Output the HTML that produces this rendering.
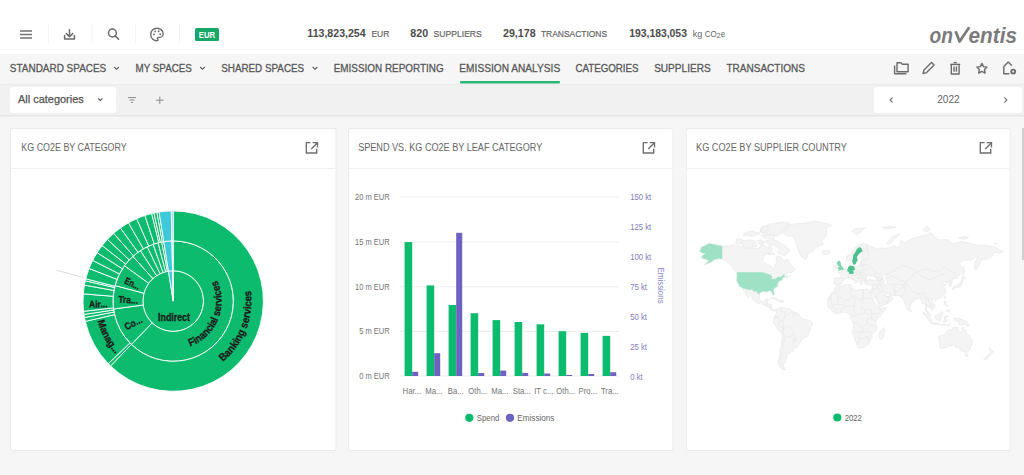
<!DOCTYPE html>
<html><head><meta charset="utf-8"><style>
*{margin:0;padding:0}html,body{width:1024px;height:475px;overflow:hidden;background:#f6f6f6}
svg{position:absolute;left:0;top:0;font-family:"Liberation Sans", sans-serif}
</style></head><body>
<svg width="1024" height="475" viewBox="0 0 1024 475">
<rect x="0" y="0" width="1024" height="475" fill="#f6f6f6"/>
<rect x="0" y="0" width="1024" height="54" fill="#ffffff"/>
<rect x="0" y="49" width="1024" height="1" fill="#fafafa"/>
<rect x="0" y="54" width="1024" height="30" fill="#f6f6f6"/>
<rect x="0" y="84" width="1024" height="1" fill="#ececec"/>
<rect x="0" y="85" width="1024" height="30" fill="#f1f1f1"/>
<rect x="0" y="115" width="1024" height="1.5" fill="#e6e6e6"/>
<rect x="48" y="24" width="1" height="19" fill="#f3f3f3"/>
<rect x="91.5" y="24" width="1" height="19" fill="#f3f3f3"/>
<rect x="135" y="24" width="1" height="19" fill="#f3f3f3"/>
<rect x="179" y="24" width="1" height="19" fill="#f3f3f3"/>
<path d="M20 31h12M20 34.5h12M20 38h12" stroke="#727272" stroke-width="1.35" fill="none"/>
<path d="M69.5 29.8v6.7M66.3 33.6l3.2 3.2 3.2-3.2M64.6 35.5v3.6h9.8v-3.6" stroke="#6b6b6b" stroke-width="1.5" fill="none" stroke-linejoin="round" stroke-linecap="round"/>
<circle cx="112.4" cy="33" r="3.9" stroke="#6b6b6b" stroke-width="1.5" fill="none"/><path d="M115.3 35.9l3.3 3.4" stroke="#6b6b6b" stroke-width="1.6" stroke-linecap="round"/>
<path d="M157 28.2c-3.6 0-6.3 2.8-6.3 6.3s2.8 6.3 6.3 6.3c.6 0 1-.5 1-1 0-.3-.1-.5-.3-.7-.2-.2-.3-.5-.3-.7 0-.6.5-1 1-1h1.3c1.9 0 3.5-1.6 3.5-3.5 0-3.1-2.8-5.7-6.2-5.7z" stroke="#6b6b6b" stroke-width="1.4" fill="none"/>
<circle cx="153.9" cy="34.4" r="0.95" fill="#6b6b6b"/>
<circle cx="155.2" cy="31.4" r="0.95" fill="#6b6b6b"/>
<circle cx="158.6" cy="31.3" r="0.95" fill="#6b6b6b"/>
<circle cx="160.2" cy="34.2" r="0.95" fill="#6b6b6b"/>
<rect x="195" y="28" width="24" height="13" rx="1.5" fill="#17a766"/>
<text x="198.82" y="37.90" textLength="16.37" lengthAdjust="spacingAndGlyphs" style="font-size:9.59px;font-weight:bold;fill:#ffffff">EUR</text>
<text x="307.39" y="37.00" textLength="58.23" lengthAdjust="spacingAndGlyphs" style="font-size:10.32px;font-weight:bold;fill:#4b4b4b">113,823,254</text>
<text x="371.41" y="37.20" textLength="17.88" lengthAdjust="spacingAndGlyphs" style="font-size:9.74px;font-weight:normal;fill:#636363;stroke:#636363;stroke-width:0.2px">EUR</text>
<text x="410.29" y="37.00" textLength="17.83" lengthAdjust="spacingAndGlyphs" style="font-size:10.32px;font-weight:bold;fill:#4b4b4b">820</text>
<text x="433.61" y="37.20" textLength="48.18" lengthAdjust="spacingAndGlyphs" style="font-size:9.74px;font-weight:normal;fill:#636363;stroke:#636363;stroke-width:0.2px">SUPPLIERS</text>
<text x="502.99" y="37.00" textLength="32.63" lengthAdjust="spacingAndGlyphs" style="font-size:10.32px;font-weight:bold;fill:#4b4b4b">29,178</text>
<text x="540.91" y="37.20" textLength="66.18" lengthAdjust="spacingAndGlyphs" style="font-size:9.74px;font-weight:normal;fill:#636363;stroke:#636363;stroke-width:0.2px">TRANSACTIONS</text>
<text x="629.19" y="37.00" textLength="57.73" lengthAdjust="spacingAndGlyphs" style="font-size:10.32px;font-weight:bold;fill:#4b4b4b">193,183,053</text>
<text x="692.81" y="36.60" textLength="9.48" lengthAdjust="spacingAndGlyphs" style="font-size:9.59px;font-weight:normal;fill:#636363">kg</text>
<text x="704.70" y="36.60" textLength="12.09" lengthAdjust="spacingAndGlyphs" style="font-size:9.88px;font-weight:normal;fill:#636363">CO</text>
<text x="716.52" y="38.20" textLength="4.16" lengthAdjust="spacingAndGlyphs" style="font-size:6.98px;font-weight:normal;fill:#636363">2</text>
<text x="720.81" y="36.60" textLength="4.48" lengthAdjust="spacingAndGlyphs" style="font-size:9.59px;font-weight:normal;fill:#636363">e</text>
<text x="929.60" y="42.90" textLength="23.40" lengthAdjust="spacingAndGlyphs" style="font-size:22.38px;font-weight:bold;fill:#7b7b7b;font-style:italic">on</text>
<path d="M955.6 31.2L959.6 41.6L969.2 27.2" stroke="#7b7b7b" stroke-width="2.7" fill="none" stroke-linejoin="round"/>
<text x="968.60" y="42.90" textLength="48.40" lengthAdjust="spacingAndGlyphs" style="font-size:22.38px;font-weight:bold;fill:#7b7b7b;font-style:italic">entis</text>
<text x="9.83" y="72.00" textLength="96.43" lengthAdjust="spacingAndGlyphs" style="font-size:11.63px;font-weight:normal;fill:#575757;stroke:#575757;stroke-width:0.32px">STANDARD SPACES</text>
<text x="135.53" y="72.00" textLength="56.33" lengthAdjust="spacingAndGlyphs" style="font-size:11.63px;font-weight:normal;fill:#575757;stroke:#575757;stroke-width:0.32px">MY SPACES</text>
<text x="221.23" y="72.00" textLength="82.93" lengthAdjust="spacingAndGlyphs" style="font-size:11.63px;font-weight:normal;fill:#575757;stroke:#575757;stroke-width:0.32px">SHARED SPACES</text>
<text x="333.73" y="72.00" textLength="109.93" lengthAdjust="spacingAndGlyphs" style="font-size:11.63px;font-weight:normal;fill:#575757;stroke:#575757;stroke-width:0.32px">EMISSION REPORTING</text>
<text x="459.33" y="72.00" textLength="100.83" lengthAdjust="spacingAndGlyphs" style="font-size:11.63px;font-weight:normal;fill:#575757;stroke:#575757;stroke-width:0.32px">EMISSION ANALYSIS</text>
<text x="575.43" y="72.00" textLength="63.13" lengthAdjust="spacingAndGlyphs" style="font-size:11.63px;font-weight:normal;fill:#575757;stroke:#575757;stroke-width:0.32px">CATEGORIES</text>
<text x="654.13" y="72.00" textLength="56.53" lengthAdjust="spacingAndGlyphs" style="font-size:11.63px;font-weight:normal;fill:#575757;stroke:#575757;stroke-width:0.32px">SUPPLIERS</text>
<text x="726.53" y="72.00" textLength="78.33" lengthAdjust="spacingAndGlyphs" style="font-size:11.63px;font-weight:normal;fill:#575757;stroke:#575757;stroke-width:0.32px">TRANSACTIONS</text>
<path d="M114.2 67l2.3 2.3 2.3-2.3" stroke="#575757" stroke-width="1.1" fill="none"/>
<path d="M200.2 67l2.3 2.3 2.3-2.3" stroke="#575757" stroke-width="1.1" fill="none"/>
<path d="M312.7 67l2.3 2.3 2.3-2.3" stroke="#575757" stroke-width="1.1" fill="none"/>
<rect x="460" y="81" width="100" height="2.5" rx="1" fill="#2cb678"/>
<g stroke="#6b6b6b" stroke-width="1.4" fill="none" stroke-linejoin="round"><path d="M894.6 65.5v8.3h11.8"/><path d="M897 62.8h4l1.3 1.5h5.8v7.5H897z"/><path d="M923 73.6l1-3.6 7.5-7.5 2.6 2.6-7.5 7.5z"/><path d="M950.2 64.4h10"/><path d="M951.3 64.4v9.6h7.8v-9.6"/><path d="M953.6 62.6h3.2"/><path d="M954 66.6v5.2M956.4 66.6v5.2"/><path d="M981.9 63.4l1.6 3.2 3.5.5-2.5 2.5.6 3.5-3.2-1.7-3.2 1.7.6-3.5-2.5-2.5 3.5-.5z"/><path d="M1011.8 65.6l-3.6-3.6-4.4 4.4v7.4h5.6"/></g>
<circle cx="1013.2" cy="71.6" r="2.9" fill="#6b6b6b"/><circle cx="1013.2" cy="71.6" r="1.1" fill="#f6f6f6"/>
<rect x="10" y="87" width="106" height="26" rx="3" fill="#ffffff"/>
<text x="18.03" y="102.50" textLength="65.73" lengthAdjust="spacingAndGlyphs" style="font-size:11.63px;font-weight:normal;fill:#505050;stroke:#505050;stroke-width:0.25px">All categories</text>
<path d="M98.2 98.3l2.1 2.1 2.1-2.1" stroke="#555" stroke-width="1.2" fill="none"/>
<path d="M128 97.6h8M129.5 100h5M131 102.4h2" stroke="#8a8a8a" stroke-width="1" fill="none"/>
<path d="M159.8 96.5v7.4M156.1 100.2h7.4" stroke="#8a8a8a" stroke-width="1" fill="none"/>
<rect x="874" y="87" width="148" height="26" rx="3" fill="#ffffff"/>
<path d="M892.6 97.5l-2.5 2.5 2.5 2.5" stroke="#777" stroke-width="1.1" fill="none"/>
<path d="M1004.4 97.5l2.5 2.5-2.5 2.5" stroke="#777" stroke-width="1.1" fill="none"/>
<text x="937.23" y="103.20" textLength="22.53" lengthAdjust="spacingAndGlyphs" style="font-size:11.63px;font-weight:normal;fill:#666">2022</text>
<rect x="10" y="128" width="326.5" height="323" rx="2" fill="#ebebeb"/>
<rect x="11" y="129" width="324.5" height="321" rx="1.5" fill="#ffffff"/>
<rect x="12" y="452" width="322.5" height="1" fill="#efefef"/>
<rect x="11" y="168" width="324.5" height="1" fill="#f0f0f0"/>
<g stroke="#6e6e6e" stroke-width="1.35" fill="none"><path d="M310.6 142.6h-4.3v10.4h10.4v-4.3"/><path d="M312.6 142.6h4.9v4.9M317.20000000000005 143l-5.9 5.9"/></g>
<rect x="348" y="128" width="325.5" height="323" rx="2" fill="#ebebeb"/>
<rect x="349" y="129" width="323.5" height="321" rx="1.5" fill="#ffffff"/>
<rect x="350" y="452" width="321.5" height="1" fill="#efefef"/>
<rect x="349" y="168" width="323.5" height="1" fill="#f0f0f0"/>
<g stroke="#6e6e6e" stroke-width="1.35" fill="none"><path d="M647.6 142.6h-4.3v10.4h10.4v-4.3"/><path d="M649.6 142.6h4.9v4.9M654.2 143l-5.9 5.9"/></g>
<rect x="685.8" y="128" width="324.70000000000005" height="323" rx="2" fill="#ebebeb"/>
<rect x="686.8" y="129" width="322.70000000000005" height="321" rx="1.5" fill="#ffffff"/>
<rect x="687.8" y="452" width="320.70000000000005" height="1" fill="#efefef"/>
<rect x="686.8" y="168" width="322.70000000000005" height="1" fill="#f0f0f0"/>
<g stroke="#6e6e6e" stroke-width="1.35" fill="none"><path d="M984.6 142.6h-4.3v10.4h10.4v-4.3"/><path d="M986.6 142.6h4.9v4.9M991.2 143l-5.9 5.9"/></g>
<text x="21.36" y="150.80" textLength="105.38" lengthAdjust="spacingAndGlyphs" style="font-size:11.05px;font-weight:normal;fill:#666">KG CO2E BY CATEGORY</text>
<text x="358.16" y="150.80" textLength="184.08" lengthAdjust="spacingAndGlyphs" style="font-size:11.05px;font-weight:normal;fill:#666">SPEND VS. KG CO2E BY LEAF CATEGORY</text>
<text x="696.06" y="150.80" textLength="150.78" lengthAdjust="spacingAndGlyphs" style="font-size:11.05px;font-weight:normal;fill:#666">KG CO2E BY SUPPLIER COUNTRY</text>
<rect x="1022" y="128" width="2" height="132" fill="#cfcfcf"/>
<path d="M173.20 301.10L173.20 270.80A30.3 30.3 0 1 1 168.46 271.17Z" fill="#0cbb6e" stroke="#ffffff" stroke-width="0.9" stroke-linejoin="round"/>
<path d="M173.20 301.10L168.46 271.17A30.3 30.3 0 0 1 172.57 270.81Z" fill="#3ccadb" stroke="#ffffff" stroke-width="0.9" stroke-linejoin="round"/>
<path d="M173.20 301.10L172.57 270.81A30.3 30.3 0 0 1 173.20 270.80Z" fill="#86cdf0" stroke="#ffffff" stroke-width="0.9" stroke-linejoin="round"/>
<path d="M173.20 240.90A60.2 60.2 0 1 1 131.38 344.40L152.15 322.90A30.3 30.3 0 1 0 173.20 270.80Z" fill="#0cbb6e" stroke="#ffffff" stroke-width="0.9" stroke-linejoin="round"/>
<path d="M131.38 344.40A60.2 60.2 0 0 1 113.52 308.96L143.16 305.05A30.3 30.3 0 0 0 152.15 322.90Z" fill="#0cbb6e" stroke="#ffffff" stroke-width="0.9" stroke-linejoin="round"/>
<path d="M113.52 308.96A60.2 60.2 0 0 1 115.05 285.52L143.93 293.26A30.3 30.3 0 0 0 143.16 305.05Z" fill="#0cbb6e" stroke="#ffffff" stroke-width="0.9" stroke-linejoin="round"/>
<path d="M115.05 285.52A60.2 60.2 0 0 1 124.50 265.72L148.69 283.29A30.3 30.3 0 0 0 143.93 293.26Z" fill="#0cbb6e" stroke="#ffffff" stroke-width="0.9" stroke-linejoin="round"/>
<path d="M124.50 265.72A60.2 60.2 0 0 1 132.92 256.36L152.93 278.58A30.3 30.3 0 0 0 148.69 283.29Z" fill="#0cbb6e" stroke="#ffffff" stroke-width="0.9" stroke-linejoin="round"/>
<path d="M132.92 256.36A60.2 60.2 0 0 1 140.41 250.61L156.70 275.69A30.3 30.3 0 0 0 152.93 278.58Z" fill="#0cbb6e" stroke="#ffffff" stroke-width="0.9" stroke-linejoin="round"/>
<path d="M140.41 250.61A60.2 60.2 0 0 1 147.28 246.76L160.16 273.75A30.3 30.3 0 0 0 156.70 275.69Z" fill="#0cbb6e" stroke="#ffffff" stroke-width="0.9" stroke-linejoin="round"/>
<path d="M147.28 246.76A60.2 60.2 0 0 1 153.10 244.35L163.09 272.54A30.3 30.3 0 0 0 160.16 273.75Z" fill="#0cbb6e" stroke="#ffffff" stroke-width="0.9" stroke-linejoin="round"/>
<path d="M153.10 244.35A60.2 60.2 0 0 1 158.13 242.82L165.61 271.77A30.3 30.3 0 0 0 163.09 272.54Z" fill="#0cbb6e" stroke="#ffffff" stroke-width="0.9" stroke-linejoin="round"/>
<path d="M158.13 242.82A60.2 60.2 0 0 1 161.71 242.01L167.42 271.36A30.3 30.3 0 0 0 165.61 271.77Z" fill="#0cbb6e" stroke="#ffffff" stroke-width="0.9" stroke-linejoin="round"/>
<path d="M161.71 242.01A60.2 60.2 0 0 1 163.78 241.64L168.46 271.17A30.3 30.3 0 0 0 167.42 271.36Z" fill="#0cbb6e" stroke="#ffffff" stroke-width="0.9" stroke-linejoin="round"/>
<path d="M163.78 241.64A60.2 60.2 0 0 1 171.94 240.91L172.57 270.81A30.3 30.3 0 0 0 168.46 271.17Z" fill="#3ccadb" stroke="#ffffff" stroke-width="0.9" stroke-linejoin="round"/>
<path d="M171.94 240.91A60.2 60.2 0 0 1 173.20 240.90L173.20 270.80A30.3 30.3 0 0 0 172.57 270.81Z" fill="#86cdf0" stroke="#ffffff" stroke-width="0.9" stroke-linejoin="round"/>
<path d="M173.20 210.90A90.2 90.2 0 1 1 110.54 365.98L131.38 344.40A60.2 60.2 0 1 0 173.20 240.90Z" fill="#0cbb6e" stroke="#ffffff" stroke-width="0.9" stroke-linejoin="round"/>
<path d="M110.54 365.98A90.2 90.2 0 0 1 108.32 363.76L129.90 342.92A60.2 60.2 0 0 0 131.38 344.40Z" fill="#0cbb6e" stroke="#ffffff" stroke-width="0.9" stroke-linejoin="round"/>
<path d="M108.32 363.76A90.2 90.2 0 0 1 85.31 321.39L114.54 314.64A60.2 60.2 0 0 0 129.90 342.92Z" fill="#0cbb6e" stroke="#ffffff" stroke-width="0.9" stroke-linejoin="round"/>
<path d="M85.31 321.39A90.2 90.2 0 0 1 84.51 317.54L114.01 312.07A60.2 60.2 0 0 0 114.54 314.64Z" fill="#0cbb6e" stroke="#ffffff" stroke-width="0.9" stroke-linejoin="round"/>
<path d="M84.51 317.54A90.2 90.2 0 0 1 83.99 314.43L113.66 310.00A60.2 60.2 0 0 0 114.01 312.07Z" fill="#0cbb6e" stroke="#ffffff" stroke-width="0.9" stroke-linejoin="round"/>
<path d="M83.99 314.43A90.2 90.2 0 0 1 83.58 311.31L113.39 307.91A60.2 60.2 0 0 0 113.66 310.00Z" fill="#0cbb6e" stroke="#ffffff" stroke-width="0.9" stroke-linejoin="round"/>
<path d="M83.58 311.31A90.2 90.2 0 0 1 83.29 293.87L113.19 296.27A60.2 60.2 0 0 0 113.39 307.91Z" fill="#0cbb6e" stroke="#ffffff" stroke-width="0.9" stroke-linejoin="round"/>
<path d="M83.29 293.87A90.2 90.2 0 0 1 84.43 285.13L113.95 290.44A60.2 60.2 0 0 0 113.19 296.27Z" fill="#0cbb6e" stroke="#ffffff" stroke-width="0.9" stroke-linejoin="round"/>
<path d="M84.43 285.13A90.2 90.2 0 0 1 85.31 280.81L114.54 287.56A60.2 60.2 0 0 0 113.95 290.44Z" fill="#0cbb6e" stroke="#ffffff" stroke-width="0.9" stroke-linejoin="round"/>
<path d="M85.31 280.81A90.2 90.2 0 0 1 85.79 278.82L114.87 286.23A60.2 60.2 0 0 0 114.54 287.56Z" fill="#0cbb6e" stroke="#ffffff" stroke-width="0.9" stroke-linejoin="round"/>
<path d="M85.79 278.82A90.2 90.2 0 0 1 89.10 268.48L117.07 279.33A60.2 60.2 0 0 0 114.87 286.23Z" fill="#0cbb6e" stroke="#ffffff" stroke-width="0.9" stroke-linejoin="round"/>
<path d="M89.10 268.48A90.2 90.2 0 0 1 92.69 260.43L119.47 273.96A60.2 60.2 0 0 0 117.07 279.33Z" fill="#0cbb6e" stroke="#ffffff" stroke-width="0.9" stroke-linejoin="round"/>
<path d="M92.69 260.43A90.2 90.2 0 0 1 97.13 252.64L122.43 268.75A60.2 60.2 0 0 0 119.47 273.96Z" fill="#0cbb6e" stroke="#ffffff" stroke-width="0.9" stroke-linejoin="round"/>
<path d="M97.13 252.64A90.2 90.2 0 0 1 102.12 245.57L125.76 264.04A60.2 60.2 0 0 0 122.43 268.75Z" fill="#0cbb6e" stroke="#ffffff" stroke-width="0.9" stroke-linejoin="round"/>
<path d="M102.12 245.57A90.2 90.2 0 0 1 107.45 239.35L129.32 259.89A60.2 60.2 0 0 0 125.76 264.04Z" fill="#0cbb6e" stroke="#ffffff" stroke-width="0.9" stroke-linejoin="round"/>
<path d="M107.45 239.35A90.2 90.2 0 0 1 113.67 233.34L133.47 255.87A60.2 60.2 0 0 0 129.32 259.89Z" fill="#0cbb6e" stroke="#ffffff" stroke-width="0.9" stroke-linejoin="round"/>
<path d="M113.67 233.34A90.2 90.2 0 0 1 120.44 227.94L137.99 252.27A60.2 60.2 0 0 0 133.47 255.87Z" fill="#0cbb6e" stroke="#ffffff" stroke-width="0.9" stroke-linejoin="round"/>
<path d="M120.44 227.94A90.2 90.2 0 0 1 128.51 222.75L143.37 248.81A60.2 60.2 0 0 0 137.99 252.27Z" fill="#0cbb6e" stroke="#ffffff" stroke-width="0.9" stroke-linejoin="round"/>
<path d="M128.51 222.75A90.2 90.2 0 0 1 136.66 218.63L148.81 246.06A60.2 60.2 0 0 0 143.37 248.81Z" fill="#0cbb6e" stroke="#ffffff" stroke-width="0.9" stroke-linejoin="round"/>
<path d="M136.66 218.63A90.2 90.2 0 0 1 144.88 215.46L154.30 243.94A60.2 60.2 0 0 0 148.81 246.06Z" fill="#0cbb6e" stroke="#ffffff" stroke-width="0.9" stroke-linejoin="round"/>
<path d="M144.88 215.46A90.2 90.2 0 0 1 151.68 213.50L158.84 242.64A60.2 60.2 0 0 0 154.30 243.94Z" fill="#0cbb6e" stroke="#ffffff" stroke-width="0.9" stroke-linejoin="round"/>
<path d="M151.68 213.50A90.2 90.2 0 0 1 153.98 212.97L160.38 242.28A60.2 60.2 0 0 0 158.84 242.64Z" fill="#0cbb6e" stroke="#ffffff" stroke-width="0.9" stroke-linejoin="round"/>
<path d="M153.98 212.97A90.2 90.2 0 0 1 156.92 212.38L162.33 241.89A60.2 60.2 0 0 0 160.38 242.28Z" fill="#0cbb6e" stroke="#ffffff" stroke-width="0.9" stroke-linejoin="round"/>
<path d="M156.92 212.38A90.2 90.2 0 0 1 159.09 212.01L163.78 241.64A60.2 60.2 0 0 0 162.33 241.89Z" fill="#0cbb6e" stroke="#ffffff" stroke-width="0.9" stroke-linejoin="round"/>
<path d="M159.09 212.01A90.2 90.2 0 0 1 171.31 210.92L171.94 240.91A60.2 60.2 0 0 0 163.78 241.64Z" fill="#3ccadb" stroke="#ffffff" stroke-width="0.9" stroke-linejoin="round"/>
<path d="M171.31 210.92A90.2 90.2 0 0 1 173.20 210.90L173.20 240.90A60.2 60.2 0 0 0 171.94 240.91Z" fill="#86cdf0" stroke="#ffffff" stroke-width="0.9" stroke-linejoin="round"/>
<path d="M56.6 270.2L84.5 277.7" stroke="#dcdcdc" stroke-width="1" fill="none"/>
<text x="158.09" y="320.80" textLength="31.81" lengthAdjust="spacingAndGlyphs" style="font-size:10.17px;font-weight:bold;fill:#1a1a1a;stroke:#1a1a1a;stroke-width:0.3px">Indirect</text>
<defs><path id="p_fin" d="M159.02 347.48A48.5 48.5 0 0 0 195.22 257.89" fill="none"/></defs>
<text style="font-size:10.61px;font-weight:bold;fill:#1a1a1a;stroke:#1a1a1a;stroke-width:0.3px"><textPath href="#p_fin" startOffset="50%" text-anchor="middle" textLength="80" lengthAdjust="spacingAndGlyphs">Financial services</textPath></text>
<defs><path id="p_bank" d="M150.96 376.18A78.3 78.3 0 0 0 208.14 231.03" fill="none"/></defs>
<text style="font-size:10.61px;font-weight:bold;fill:#1a1a1a;stroke:#1a1a1a;stroke-width:0.3px"><textPath href="#p_bank" startOffset="50%" text-anchor="middle" textLength="80" lengthAdjust="spacingAndGlyphs">Banking services</textPath></text>
<defs><path id="p_man" d="M129.76 235.96A78.3 78.3 0 0 0 204.67 372.80" fill="none"/></defs>
<text style="font-size:10.17px;font-weight:bold;fill:#1a1a1a;stroke:#1a1a1a;stroke-width:0.3px"><textPath href="#p_man" startOffset="50%" text-anchor="middle" textLength="38" lengthAdjust="spacingAndGlyphs">Manag...</textPath></text>
<text x="126.56" y="330.21" textLength="18.5" lengthAdjust="spacingAndGlyphs" transform="rotate(-26.75 126.56 330.21)" style="font-size:9.59px;font-weight:bold;fill:#1a1a1a;stroke:#1a1a1a;stroke-width:0.3px">Co...</text>
<text x="118.14" y="302.50" textLength="19.7" lengthAdjust="spacingAndGlyphs" transform="rotate(3.75 118.14 302.50)" style="font-size:9.59px;font-weight:bold;fill:#1a1a1a;stroke:#1a1a1a;stroke-width:0.3px">Tra...</text>
<text x="123.66" y="283.01" textLength="16" lengthAdjust="spacingAndGlyphs" transform="rotate(25.50 123.66 283.01)" style="font-size:9.59px;font-weight:bold;fill:#1a1a1a;stroke:#1a1a1a;stroke-width:0.3px">En...</text>
<text x="89.05" y="307.57" textLength="18.5" lengthAdjust="spacingAndGlyphs" transform="rotate(-1.00 89.05 307.57)" style="font-size:9.59px;font-weight:bold;fill:#1a1a1a;stroke:#1a1a1a;stroke-width:0.3px">Air...</text>
<rect x="400" y="196.5" width="219" height="1" fill="#ededed"/>
<rect x="400" y="241.5" width="219" height="1" fill="#ededed"/>
<rect x="400" y="286.3" width="219" height="1" fill="#ededed"/>
<rect x="400" y="330.9" width="219" height="1" fill="#ededed"/>
<rect x="400" y="375.5" width="219" height="1" fill="#ededed"/>
<text x="355.09" y="199.80" textLength="34.51" lengthAdjust="spacingAndGlyphs" style="font-size:8.7px;fill:#747474">20 m EUR</text>
<text x="355.09" y="245.00" textLength="34.51" lengthAdjust="spacingAndGlyphs" style="font-size:8.7px;fill:#747474">15 m EUR</text>
<text x="355.09" y="289.80" textLength="34.51" lengthAdjust="spacingAndGlyphs" style="font-size:8.7px;fill:#747474">10 m EUR</text>
<text x="359.25" y="334.40" textLength="30.35" lengthAdjust="spacingAndGlyphs" style="font-size:8.7px;fill:#747474">5 m EUR</text>
<text x="359.25" y="379.40" textLength="30.35" lengthAdjust="spacingAndGlyphs" style="font-size:8.7px;fill:#747474">0 m EUR</text>
<text x="630.20" y="200.20" textLength="21.09" lengthAdjust="spacingAndGlyphs" style="font-size:8.7px;fill:#827dc0">150 kt</text>
<text x="630.20" y="230.20" textLength="21.09" lengthAdjust="spacingAndGlyphs" style="font-size:8.7px;fill:#827dc0">125 kt</text>
<text x="630.20" y="260.20" textLength="21.09" lengthAdjust="spacingAndGlyphs" style="font-size:8.7px;fill:#827dc0">100 kt</text>
<text x="630.20" y="290.20" textLength="16.79" lengthAdjust="spacingAndGlyphs" style="font-size:8.7px;fill:#827dc0">75 kt</text>
<text x="630.20" y="320.20" textLength="16.79" lengthAdjust="spacingAndGlyphs" style="font-size:8.7px;fill:#827dc0">50 kt</text>
<text x="630.20" y="350.20" textLength="16.79" lengthAdjust="spacingAndGlyphs" style="font-size:8.7px;fill:#827dc0">25 kt</text>
<text x="630.20" y="380.20" textLength="12.48" lengthAdjust="spacingAndGlyphs" style="font-size:8.7px;fill:#827dc0">0 kt</text>
<text x="657.8" y="267.6" transform="rotate(90 657.8 267.6)" textLength="36" lengthAdjust="spacingAndGlyphs" style="font-size:8.5px;fill:#8a86c6">Emissions</text>
<rect x="404.60" y="242.1" width="7.6" height="133.90" fill="#0cbb6e"/>
<rect x="412.20" y="371.8" width="6" height="4.20" fill="#6c63c1"/>
<text x="402.55" y="394.20" textLength="18.50" lengthAdjust="spacingAndGlyphs" style="font-size:8.7px;fill:#747474">Har...</text>
<rect x="426.60" y="285.4" width="7.6" height="90.60" fill="#0cbb6e"/>
<rect x="434.20" y="353.2" width="6" height="22.80" fill="#6c63c1"/>
<text x="425.20" y="394.20" textLength="17.21" lengthAdjust="spacingAndGlyphs" style="font-size:8.7px;fill:#747474">Ma...</text>
<rect x="448.60" y="305" width="7.6" height="71.00" fill="#0cbb6e"/>
<rect x="456.20" y="232.8" width="6" height="143.20" fill="#6c63c1"/>
<text x="447.84" y="394.20" textLength="15.92" lengthAdjust="spacingAndGlyphs" style="font-size:8.7px;fill:#747474">Ba...</text>
<rect x="470.60" y="313.2" width="7.6" height="62.80" fill="#0cbb6e"/>
<rect x="478.20" y="373" width="6" height="3.00" fill="#6c63c1"/>
<text x="468.33" y="394.20" textLength="18.93" lengthAdjust="spacingAndGlyphs" style="font-size:8.7px;fill:#747474">Oth...</text>
<rect x="492.60" y="320.1" width="7.6" height="55.90" fill="#0cbb6e"/>
<rect x="500.20" y="370.6" width="6" height="5.40" fill="#6c63c1"/>
<text x="491.20" y="394.20" textLength="17.21" lengthAdjust="spacingAndGlyphs" style="font-size:8.7px;fill:#747474">Ma...</text>
<rect x="514.60" y="322" width="7.6" height="54.00" fill="#0cbb6e"/>
<rect x="522.20" y="372.9" width="6" height="3.10" fill="#6c63c1"/>
<text x="512.76" y="394.20" textLength="18.08" lengthAdjust="spacingAndGlyphs" style="font-size:8.7px;fill:#747474">Sta...</text>
<rect x="536.60" y="324.3" width="7.6" height="51.70" fill="#0cbb6e"/>
<rect x="544.20" y="373.5" width="6" height="2.50" fill="#6c63c1"/>
<text x="534.19" y="394.20" textLength="19.22" lengthAdjust="spacingAndGlyphs" style="font-size:8.7px;fill:#747474">IT c...</text>
<rect x="558.60" y="331.2" width="7.6" height="44.80" fill="#0cbb6e"/>
<rect x="566.20" y="375" width="6" height="1.00" fill="#6c63c1"/>
<text x="556.33" y="394.20" textLength="18.93" lengthAdjust="spacingAndGlyphs" style="font-size:8.7px;fill:#747474">Oth...</text>
<rect x="580.60" y="332.9" width="7.6" height="43.10" fill="#0cbb6e"/>
<rect x="588.20" y="374" width="6" height="2.00" fill="#6c63c1"/>
<text x="578.55" y="394.20" textLength="18.50" lengthAdjust="spacingAndGlyphs" style="font-size:8.7px;fill:#747474">Pro...</text>
<rect x="602.60" y="335.9" width="7.6" height="40.10" fill="#0cbb6e"/>
<rect x="610.20" y="372.2" width="6" height="3.80" fill="#6c63c1"/>
<text x="600.91" y="394.20" textLength="17.78" lengthAdjust="spacingAndGlyphs" style="font-size:8.7px;fill:#747474">Tra...</text>
<circle cx="469.3" cy="417.8" r="4.1" fill="#0cbb6e"/>
<text x="476.85" y="421.10" textLength="22.50" lengthAdjust="spacingAndGlyphs" style="font-size:8.72px;font-weight:normal;fill:#666">Spend</text>
<circle cx="510" cy="417.8" r="4.1" fill="#6c63c1"/>
<text x="517.35" y="421.10" textLength="37.10" lengthAdjust="spacingAndGlyphs" style="font-size:8.72px;font-weight:normal;fill:#666">Emissions</text>
<circle cx="837.3" cy="417.5" r="4.1" fill="#0cbb6e"/>
<text x="844.65" y="420.90" textLength="17.30" lengthAdjust="spacingAndGlyphs" style="font-size:8.72px;font-weight:normal;fill:#666">2022</text>
<path d="M699.6 251.7L701.3 247.0L709.1 243.3L722.5 246.0L727.6 246.1L733.5 245.0L739.5 246.1L744.6 248.3L750.5 248.0L759.0 248.6L762.0 243.0L765.8 247.6L770.0 245.7L773.0 249.8L769.2 253.3L765.2 254.9L762.2 260.7L763.7 262.8L768.3 264.7L772.4 267.6L774.3 269.6L774.7 265.9L776.8 261.7L776.1 258.2L776.0 256.2L780.2 256.3L781.5 257.6L783.1 260.4L784.5 261.1L787.4 258.8L790.0 263.5L793.8 268.2L795.0 269.2L792.1 272.7L787.7 272.3L786.2 276.4L788.3 276.9L790.4 275.9L791.3 275.3L788.3 276.9L786.2 277.7L782.6 277.8L782.8 279.9L779.4 281.0L778.1 283.0L777.7 284.6L778.1 286.2L775.6 287.6L773.4 289.8L774.3 294.4L773.6 295.6L772.6 294.4L771.9 293.0L770.9 291.2L769.2 290.8L766.5 292.0L762.4 291.5L759.7 293.2L759.4 294.9L759.2 298.2L760.7 301.1L762.0 301.8L765.4 300.4L765.5 299.3L768.3 298.9L767.3 303.7L771.5 304.6L771.1 308.0L773.0 309.9L774.7 309.3L776.6 310.2L775.6 311.0L774.3 311.1L771.3 310.2L769.4 308.5L767.9 306.3L764.5 305.4L762.4 303.7L760.3 304.0L757.3 302.9L752.9 299.8L751.9 297.4L750.1 295.6L748.0 293.1L746.4 290.7L744.7 289.5L746.3 292.1L747.5 294.8L749.2 297.4L747.0 295.9L745.2 293.2L743.8 290.9L742.8 288.8L741.6 287.4L739.8 286.9L738.2 283.7L736.9 281.1L736.5 278.7L736.9 275.1L736.3 272.8L737.8 272.1L734.4 270.5L731.8 265.9L728.4 261.7L725.5 260.7L722.5 259.2L719.1 258.8L716.5 259.2L713.6 260.2L711.5 262.3L708.1 263.5L703.8 265.5L708.9 260.8L704.7 259.2L702.1 258.5L701.7 256.0L705.1 253.3L702.5 253.3ZM789.6 250.3L787.0 254.3L784.0 255.8L781.1 253.7L777.3 253.3L779.4 248.6L775.1 245.3L769.2 244.9L765.8 241.0L772.6 239.3L777.7 241.3L782.8 244.1L785.3 246.3L788.3 248.6ZM741.2 243.0L742.9 246.9L750.5 247.4L756.5 246.3L755.6 241.1L750.5 239.8L742.9 240.6ZM735.7 243.0L738.6 244.3L742.9 242.2L741.2 239.0L736.9 238.5ZM765.8 234.7L777.7 235.6L787.9 228.3L789.6 223.2L782.8 222.2L769.2 223.9L763.2 227.3L760.7 232.0ZM764.1 238.2L774.3 238.2L774.3 234.7L765.8 234.7L760.7 235.6ZM765.8 242.2L760.7 239.8L757.3 240.6L759.0 243.8L762.4 243.0ZM742.9 235.6L753.1 236.5L759.8 233.3L752.2 231.1L744.6 232.9ZM759.8 232.0L768.3 232.0L767.5 226.3L761.5 226.3ZM768.3 254.6L773.9 254.6L773.4 252.6L769.2 251.2ZM780.2 231.1L786.2 235.6L793.0 236.5L795.5 241.5L797.2 246.9L798.5 250.5L800.2 255.3L804.4 259.2L806.5 258.5L808.2 253.3L812.5 251.2L815.5 247.6L823.5 244.6L821.8 240.6L825.2 237.3L826.9 233.8L826.1 228.3L832.0 225.3L825.2 223.2L814.2 220.9L804.0 223.5L795.5 223.7L789.6 224.7L785.3 227.3L781.9 229.6ZM821.8 251.9L823.1 254.2L826.9 254.8L829.9 253.4L830.7 251.9L829.5 250.5L825.2 251.0L822.7 250.6ZM770.0 298.6L772.6 297.4L776.4 298.0L779.2 300.0L776.8 300.4L774.3 298.7L771.7 298.4ZM779.0 301.5L780.4 300.3L782.8 300.5L784.1 301.4L781.5 302.3L779.2 301.9ZM776.6 310.2L778.1 308.5L781.1 307.3L781.7 308.0L782.8 306.9L785.3 308.4L789.6 308.3L791.3 310.2L793.8 312.3L798.1 313.2L799.8 315.9L801.0 318.1L804.4 319.5L809.1 320.4L812.3 322.1L812.5 325.1L810.4 328.1L809.1 332.4L807.8 335.9L805.7 337.3L801.4 339.5L800.6 342.3L798.1 345.5L796.8 347.4L794.7 348.3L792.5 347.9L793.8 349.8L793.1 351.8L789.4 352.3L789.3 354.1L787.0 354.3L787.0 355.8L786.6 358.4L784.9 360.0L786.2 361.6L783.6 364.3L784.0 366.5L783.9 369.3L785.7 369.5L782.8 369.7L779.4 366.6L778.1 361.6L779.4 357.4L779.8 353.3L779.8 350.3L781.5 345.5L781.5 341.8L782.5 337.7L782.6 333.3L778.5 330.7L777.4 328.9L774.7 324.2L773.2 322.1L774.1 319.9L773.5 318.2L774.3 316.6L775.3 315.7L776.4 313.6L776.6 311.4ZM837.2 285.7L834.1 288.8L833.9 291.2L831.2 293.2L827.9 298.9L827.6 304.7L828.0 306.9L829.5 308.1L830.7 309.3L832.4 311.5L835.8 313.7L838.8 313.0L843.0 312.4L846.0 312.0L847.3 313.7L849.4 313.6L850.4 314.3L850.2 316.6L849.6 318.2L852.2 321.1L853.4 324.6L853.7 327.6L852.2 332.1L854.5 337.2L855.1 340.9L856.2 342.4L857.8 347.3L859.2 348.2L863.8 347.4L868.1 344.6L869.8 342.3L870.0 340.0L872.3 338.2L871.9 335.0L873.4 332.8L876.6 330.2L876.4 326.3L875.6 323.4L875.7 321.2L877.4 318.8L881.3 315.3L884.2 311.9L885.7 308.5L885.8 307.3L879.6 308.5L879.0 307.3L877.4 305.9L875.3 303.7L873.9 301.3L872.4 297.3L870.6 293.5L869.8 291.2L868.5 289.7L863.4 289.5L859.3 289.2L858.3 290.9L855.4 289.8L851.5 288.1L850.9 284.7L849.4 284.6L844.7 284.7L840.5 286.3ZM884.1 327.6L885.1 330.7L884.5 332.4L882.5 338.6L880.6 339.5L879.1 336.4L879.8 331.4L882.1 329.4ZM834.6 284.5L834.1 282.7L834.7 279.5L834.3 278.4L835.4 277.8L840.7 278.1L841.2 275.3L840.1 274.0L838.2 272.8L840.9 272.4L842.4 271.3L843.6 270.0L845.2 269.3L846.3 267.6L848.1 267.1L849.5 266.5L849.5 264.7L849.1 263.4L850.7 262.2L851.1 263.5L851.5 266.0L852.8 265.9L854.3 266.6L857.9 265.5L860.2 264.9L860.0 262.9L862.2 260.1L863.0 259.8L866.0 259.6L867.7 259.3L863.4 258.8L860.9 258.8L860.5 256.6L863.4 252.6L862.7 251.5L860.5 252.6L858.3 254.6L857.1 256.6L856.9 258.3L858.2 259.8L856.2 262.9L856.2 263.9L854.3 264.8L853.1 264.4L852.2 261.7L851.1 260.1L849.0 261.6L846.9 260.6L846.4 257.9L846.9 256.0L849.4 254.6L851.1 253.3L853.2 249.8L854.9 247.6L858.3 245.3L862.6 243.8L866.0 243.8L868.5 245.3L870.2 246.3L871.9 246.6L877.0 249.1L877.0 250.5L879.6 247.6L881.3 248.3L887.2 247.9L891.4 247.1L893.1 245.8L899.9 247.6L900.8 240.6L901.6 240.2L904.2 243.0L905.9 242.2L910.1 239.8L916.1 237.3L927.1 234.7L930.5 232.6L937.3 239.0L938.1 239.8L948.3 239.8L952.6 243.8L961.1 241.5L969.6 243.0L978.0 245.3L986.5 245.5L995.0 246.9L1000.1 250.5L1003.8 251.2L1000.1 253.5L995.9 252.3L993.3 253.3L992.5 256.0L989.1 257.9L986.5 259.2L981.4 259.2L980.6 261.9L979.7 264.1L978.0 266.5L976.8 268.8L975.2 269.9L974.6 264.7L974.6 262.3L978.0 257.3L975.5 257.0L971.2 260.2L963.6 260.1L959.4 263.5L961.9 267.6L961.5 272.7L956.8 278.2L953.4 278.8L952.1 281.0L952.0 284.5L950.0 286.9L949.6 286.4L949.2 284.0L947.9 281.7L945.4 282.5L945.8 281.0L942.4 282.5L943.2 284.3L946.2 284.5L944.3 286.7L945.6 289.8L945.8 291.3L943.7 295.3L941.5 297.1L938.6 298.2L936.0 299.1L933.9 298.8L932.6 300.2L932.0 301.5L934.6 304.6L934.9 307.4L932.6 309.7L931.3 310.0L931.2 308.5L929.6 307.6L927.8 305.9L926.4 308.6L927.4 311.2L927.9 311.6L930.0 313.8L930.7 316.2L928.2 315.0L927.4 312.7L925.7 310.6L925.8 306.3L925.1 303.3L922.4 303.7L922.0 300.6L920.6 299.3L918.6 298.4L917.3 298.7L915.9 299.8L913.9 301.3L910.4 303.9L910.3 306.3L910.0 308.6L908.0 310.5L907.0 309.0L905.7 306.5L904.3 302.8L904.0 301.1L903.8 299.0L901.8 298.2L900.5 297.1L898.8 295.6L894.8 295.6L890.8 295.0L890.0 293.7L885.9 293.2L884.7 291.2L883.0 291.2L885.1 294.4L885.9 295.3L886.0 296.4L888.5 296.5L890.0 294.6L890.1 295.8L891.9 297.0L893.0 298.1L891.3 301.1L888.9 302.8L886.5 304.0L883.5 305.4L880.4 306.5L879.0 306.6L878.5 304.1L876.8 300.6L874.9 297.5L873.2 294.8L871.9 293.0L871.3 293.0L869.8 291.2L871.5 289.8L872.6 286.9L872.8 285.0L871.1 285.3L868.2 284.7L866.0 284.8L864.7 283.0L864.5 281.5L866.8 280.4L870.2 279.5L873.2 280.2L877.5 280.0L877.0 278.3L874.0 276.7L871.9 275.9L870.6 276.9L869.8 275.6L868.3 274.8L866.6 277.2L865.8 279.3L866.5 280.3L864.4 280.9L862.6 280.8L861.6 281.2L862.6 283.3L861.5 285.0L860.1 283.7L858.8 281.0L857.9 279.0L855.4 277.4L853.7 275.7L852.6 276.2L852.8 277.4L854.5 279.5L856.0 280.2L857.9 281.4L856.6 282.5L855.8 283.5L855.5 281.5L854.3 280.7L852.8 279.8L851.1 278.5L849.6 277.0L847.9 278.4L846.0 278.0L844.8 279.1L842.9 280.5L841.9 282.0L842.4 282.8L840.8 284.3L838.4 284.8L837.4 285.5L836.9 284.7ZM837.4 271.0L839.7 270.3L843.4 269.7L843.6 268.0L842.4 267.1L840.8 264.6L840.5 262.1L839.4 260.9L838.0 260.9L836.9 263.1L837.5 264.7L838.1 265.5L839.7 266.5L838.4 267.3L837.8 269.1L839.4 269.5ZM837.1 268.5L837.1 266.6L837.5 265.9L835.9 264.9L833.7 266.2L833.5 269.0L835.0 269.2ZM910.0 309.1L911.6 311.0L911.0 312.3L910.1 311.9ZM953.3 287.4L956.8 287.6L961.1 286.4L961.9 283.0L962.8 281.5L962.3 280.0L961.1 280.7L960.9 283.0L958.3 284.3L955.1 285.9L953.4 286.9ZM961.1 279.3L962.2 280.1L965.7 278.2L964.5 277.3L962.7 275.9L962.1 278.3ZM952.6 287.9L954.0 288.1L953.7 289.9L952.7 289.9ZM962.8 275.3L964.0 271.6L964.9 272.1L963.6 266.5L963.2 266.5L962.8 271.0ZM944.2 297.5L945.4 295.5L945.7 296.2L944.8 298.5ZM934.5 301.1L936.0 300.1L936.4 300.5L935.3 301.8ZM944.1 301.5L946.0 301.5L946.2 303.7L947.5 306.3L945.4 305.6L944.3 304.6ZM945.8 311.4L949.2 309.7L949.6 311.4L948.7 312.5L947.1 310.8ZM923.1 312.7L925.0 313.0L927.5 315.7L930.9 318.7L932.2 320.1L932.0 322.3L930.9 322.3L927.9 319.5L925.8 316.1L923.3 314.0ZM931.5 323.2L933.9 322.8L936.4 322.9L939.4 324.0L939.3 324.8L933.9 324.0L931.8 323.4ZM934.7 316.1L936.4 315.7L938.1 314.7L940.3 312.7L941.5 311.4L943.4 313.0L942.4 313.7L942.1 316.6L941.1 318.7L940.9 320.6L939.4 320.8L936.4 319.9L935.6 318.7L934.7 317.0ZM943.7 322.1L944.5 318.2L944.1 316.8L948.2 316.1L945.4 318.2L946.9 321.2L944.9 322.1ZM953.4 318.5L956.0 318.1L959.4 318.8L961.9 319.6L965.3 321.0L967.4 322.5L969.6 326.2L967.0 325.9L964.5 324.0L961.9 325.2L959.4 324.5L958.9 321.9L956.0 320.8L954.3 319.8ZM947.5 325.3L950.3 324.5L948.3 325.9L947.1 326.2ZM940.7 324.5L943.2 324.5L946.6 324.4L946.2 324.9L941.1 325.1ZM938.6 336.4L939.0 340.2L939.8 343.6L939.8 347.6L942.4 348.4L947.1 347.3L949.2 345.8L953.4 345.0L956.8 348.2L958.9 346.5L959.4 348.9L961.5 351.3L964.5 351.8L966.4 352.4L969.6 350.8L970.6 347.2L972.3 343.6L972.5 340.9L970.4 337.7L968.7 335.0L966.2 333.3L965.6 330.2L964.0 329.4L963.2 326.5L962.3 328.5L962.3 332.0L960.6 332.4L957.7 330.7L958.3 327.8L953.4 327.0L952.1 330.1L949.2 329.4L945.9 332.0L944.9 334.2L941.5 335.1ZM965.0 354.0L968.1 354.2L967.9 356.5L966.6 356.9L965.3 355.6ZM988.8 347.8L990.4 349.3L993.7 351.0L992.5 352.8L990.8 354.8L990.4 352.8L989.8 352.5L990.1 350.1ZM988.8 353.8L990.2 354.8L989.1 357.0L987.4 358.4L985.7 360.1L983.6 359.5L985.3 357.4L987.4 355.3ZM851.5 231.1L855.8 228.3L865.1 227.9L860.9 232.0L855.8 234.6ZM886.3 243.8L889.7 239.8L894.0 235.6L899.9 234.2L894.0 239.0L890.6 243.8ZM922.9 230.2L927.1 226.3L930.5 229.2L927.1 232.0ZM958.5 238.2L962.8 236.5L968.7 237.0L965.3 239.3ZM882.1 227.7L891.4 226.3L896.5 227.3L888.9 228.7ZM993.7 243.5L996.7 243.0L995.4 244.1Z" fill="#f4f4f4" stroke="#e5e5e5" stroke-width="0.6" stroke-linejoin="round"/>
<path d="M882.1 276.9L884.7 274.8L887.2 274.3L887.2 276.4L885.5 276.9L887.0 280.0L888.0 284.0L885.5 284.8L883.8 283.7L884.2 281.0L882.5 278.5Z" fill="#ffffff" stroke="#e5e5e5" stroke-width="0.6"/>
<path d="M722.5 246.0L722.5 258.8M742.8 288.8L744.7 288.8L748.0 289.9L750.3 289.9L751.8 289.5L753.5 291.3L754.8 292.1L756.0 291.3L757.7 293.5L759.4 294.9M764.1 305.0L766.6 302.1M766.5 303.8L767.9 306.3M771.3 304.6L769.4 308.0M771.1 308.2L769.4 308.0M781.1 307.3L780.6 311.4L784.9 312.3L785.3 316.6L783.2 320.8L780.2 320.8L778.1 317.8L775.3 316.1M791.3 310.2L790.4 313.2L787.9 314.0L785.3 316.6M793.8 312.3L793.0 316.1M796.4 312.7L795.5 315.7M798.1 313.2L797.6 315.4M783.2 320.8L782.8 325.9L783.6 328.5L783.6 333.3L782.6 333.3M783.6 328.5L787.0 325.9L791.3 328.9L793.0 331.5L793.0 334.6L789.6 336.8L785.3 336.8L783.6 333.3M785.3 336.8L784.0 340.9L782.8 346.5L781.5 353.3L781.1 359.5L780.6 363.8L782.8 366.0M793.0 334.6L795.5 336.8L795.9 340.0L793.4 341.3L793.0 338.2L789.6 336.8M795.9 340.0L793.4 343.6L796.8 347.4M778.1 317.8L774.3 316.6M780.2 320.8L778.5 325.1L780.2 326.8L783.6 328.5M834.8 293.3L840.9 286.4M834.8 293.3L838.1 295.7L844.7 301.1L845.6 300.6L852.4 297.1L852.0 296.2L850.3 291.2L852.0 288.3M831.2 293.2L834.8 293.3M827.9 298.9L831.2 299.0L831.2 293.2M831.2 299.0L832.0 304.6L838.0 304.6L838.0 296.2M838.0 304.6L842.2 304.6L845.6 305.9L845.6 307.2L842.2 308.0L839.7 312.7M845.6 305.9L849.0 306.3L854.1 306.3L854.5 310.6M832.0 304.6L832.4 306.7L835.4 308.5L835.8 310.6L835.8 313.7M852.4 297.1L855.8 297.1L862.6 300.2L862.6 304.6L860.9 306.5L861.2 308.2L865.1 309.3L871.1 309.3L871.9 313.2M862.6 300.2L863.4 298.4L873.2 298.4M863.4 298.4L863.4 289.5M855.8 297.1L854.9 300.2L854.1 306.3M854.5 310.6L855.4 314.0L855.8 315.7L854.1 316.6L853.2 315.5L850.4 315.4M855.8 315.7L857.5 314.4L861.3 313.8L865.1 313.2L868.5 314.2L871.9 313.2M865.1 309.3L864.3 312.7M871.9 313.2L877.0 314.2L879.6 313.3L882.5 310.6L878.7 308.0M871.9 313.2L871.1 318.2L867.7 318.2L867.2 321.2L868.1 324.6L870.2 325.5L876.4 326.3M871.1 318.2L875.7 321.2M853.4 322.3L856.2 322.5L857.5 324.2L860.9 326.8L862.6 326.8L866.4 324.6L867.2 321.2M852.2 332.1L859.2 332.4L860.9 331.1L862.6 332.8L867.7 331.1L870.2 332.0L871.9 335.0M860.9 326.8L862.6 328.5L862.6 332.8M856.2 342.4L859.2 342.3L859.2 336.4L860.0 332.8M859.2 338.9L864.3 338.2L868.5 336.8M869.8 342.3L866.4 336.4L868.5 336.8L870.0 340.0M840.7 278.1L844.8 279.1M843.6 270.0L844.3 269.8L847.2 271.6L849.2 272.1L848.7 273.6L847.9 275.0L848.6 277.4M848.7 273.6L850.7 274.0L852.4 274.3L853.7 275.7M853.2 273.7L855.8 272.6L856.6 273.2L856.2 274.8L854.1 275.7M854.6 268.2L854.9 269.9L857.9 271.6L861.3 272.1L862.6 270.5L862.2 266.8L860.2 264.9M861.3 272.1L860.0 273.2L857.5 273.4L856.2 274.8M861.3 272.1L864.3 273.2L866.0 274.8L868.3 274.8M860.0 273.2L861.3 275.3L859.4 275.2L858.8 279.0M861.3 275.3L864.3 275.3L866.0 276.9M861.6 277.2L865.8 279.3M861.6 277.2L861.3 279.5L860.0 280.7M864.4 280.9L864.3 279.8L866.5 280.3M862.2 266.8L866.0 264.1L869.4 264.7L871.9 268.8L876.2 271.6L876.2 274.1L874.5 274.3M862.6 270.5L869.4 268.8M860.0 262.9L865.1 262.1L866.0 259.6M860.2 264.9L865.1 264.5L866.0 264.1M867.7 259.3L868.9 255.4L867.0 246.1L866.0 243.8M862.7 251.5L867.2 251.2L866.6 247.6L862.2 249.1M859.6 246.9L862.6 245.3M874.0 276.7L883.0 279.5L882.1 276.9M877.5 280.0L880.4 280.5L883.0 279.5M872.8 285.0L877.9 284.5L880.2 284.3L880.0 282.0L877.5 280.0M877.9 284.5L877.0 286.9L875.3 289.3L872.6 288.5L872.6 286.9M880.2 284.3L881.3 286.4L882.5 289.3L883.0 291.2M877.0 286.9L881.7 292.0L883.0 291.2M875.3 289.3L873.6 289.8L871.9 293.0M881.7 292.0L878.7 293.5L874.9 297.5M886.0 296.4L888.9 298.0L888.9 300.2L886.5 304.0M888.9 298.0L889.3 295.3M878.5 304.1L881.3 302.4L886.3 301.1L888.9 300.2M888.0 284.0L893.1 284.5L894.4 285.9L894.0 289.8L895.7 291.6L894.6 295.7M894.0 289.8L894.4 291.3L898.7 291.3L901.6 288.3L902.9 285.0L905.5 284.3M901.6 288.3L905.0 286.9L906.3 284.5M898.8 295.6L902.5 296.2L905.5 290.2L905.0 286.9M893.1 284.5L898.2 284.1L900.4 284.5L902.9 285.0L905.9 282.0L904.6 281.0L899.9 280.5L896.5 278.0L891.9 275.9L889.7 276.4L887.2 279.5M905.9 282.0L910.1 279.0L910.5 276.4L916.1 272.1L914.4 274.3L912.2 275.9M887.2 274.3L894.8 270.5L901.6 265.3L906.7 266.5L914.4 269.9L916.5 272.1M916.5 272.1L920.3 270.5L925.4 268.8L932.2 271.0L940.7 271.0L944.1 267.1L950.0 271.0L956.0 273.2L953.4 278.8M916.5 272.1L923.7 277.4L931.3 280.0L937.3 276.4L940.7 274.8L944.1 274.3M905.5 284.3L908.4 285.9L910.1 288.8L911.8 291.2L916.9 293.2L920.3 293.7L924.6 293.0L925.0 297.1L927.9 298.9L933.0 298.9M916.9 293.2L917.8 294.8L920.3 295.6L920.7 298.9M925.0 297.1L926.3 300.2L926.3 303.7L925.8 306.3M927.9 298.9L929.2 302.4L931.8 304.1L933.0 305.4M927.9 298.9L930.5 298.0M929.6 307.6L929.6 305.9L931.8 305.0M953.4 278.8L952.1 279.0L948.3 281.3L947.9 281.7M949.6 283.5L951.7 283.0" fill="none" stroke="#e5e5e5" stroke-width="0.6" stroke-linejoin="round"/>
<path d="M736.3 272.8L737.8 272.1L761.5 272.1L761.5 271.7L766.2 273.2L770.5 274.8L772.2 276.1L772.2 278.9L775.1 278.7L775.1 278.2L777.3 277.2L778.5 276.4L781.5 276.4L783.4 273.9L784.6 274.2L784.6 275.7L785.3 276.6L782.6 277.8L782.8 279.9L779.4 281.0L778.1 283.0L777.7 284.6L778.1 286.2L775.6 287.6L773.4 289.8L774.3 294.4L773.6 295.6L772.6 294.4L771.9 293.0L770.9 291.2L769.2 290.8L766.5 292.0L762.4 291.5L759.7 293.2L759.4 294.9L757.7 293.5L756.0 291.3L754.8 292.1L753.5 291.3L751.8 289.5L750.3 289.9L748.0 289.9L744.7 288.8L742.8 288.8L741.6 287.4L739.8 286.9L738.2 283.7L736.9 281.1L736.5 278.7L736.9 275.1ZM722.5 246.0L709.1 243.3L701.3 247.0L699.6 251.7L702.5 253.3L705.1 253.3L701.7 256.0L702.1 258.5L704.7 259.2L708.9 260.8L703.8 265.5L708.1 263.5L711.5 262.3L713.6 260.2L716.5 259.2L719.1 258.8L722.5 259.2Z" fill="#9fe1c4" stroke="#ffffff" stroke-width="0.3"/>
<path d="M837.4 271.0L839.7 270.3L843.4 269.7L843.6 268.0L842.4 267.1L840.8 264.6L840.5 262.1L839.4 260.9L838.0 260.9L836.9 263.1L837.5 264.7L838.1 265.5L839.7 266.5L838.4 267.3L837.8 269.1L839.4 269.5Z" fill="#7fd6b0" stroke="none"/>
<path d="M852.0 260.9L853.2 264.2L854.3 264.7L856.0 263.8L856.1 262.5L857.8 259.9L856.9 258.3L857.1 256.3L858.5 254.5L860.5 252.6L862.4 251.5L861.9 249.1L859.9 247.0L858.0 247.9L856.0 250.5L854.8 252.9L853.2 255.0L853.1 257.6L852.6 259.7ZM848.1 267.1L849.5 266.5L849.5 265.3L850.3 265.5L851.5 266.0L852.8 265.9L854.3 266.6L854.6 268.2L854.9 269.9L852.8 270.7L853.9 272.3L853.2 273.7L850.7 274.0L848.7 273.6L849.2 272.1L847.6 271.6L847.3 270.1L847.2 269.0L848.1 268.4Z" fill="#4fc190" stroke="none"/>
</svg>
</body></html>
